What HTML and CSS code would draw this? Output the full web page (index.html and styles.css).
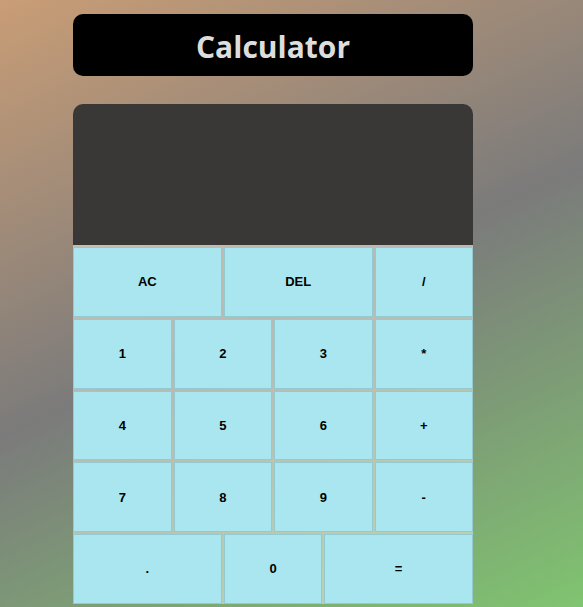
FILE: index.html
```html
<!DOCTYPE html>
<html lang="en">
<head>
<meta charset="utf-8">
<title>Calculator</title>
<link rel="stylesheet" href="styles.css">
</head>
<body>
<div class="app">
  <h1 class="title">Calculator</h1>
  <div class="calc">
    <div class="display"></div>
    <div class="keys">
      <button class="key span3">AC</button>
      <button class="key span3">DEL</button>
      <button class="key">/</button>
      <button class="key">1</button>
      <button class="key">2</button>
      <button class="key">3</button>
      <button class="key">*</button>
      <button class="key">4</button>
      <button class="key">5</button>
      <button class="key">6</button>
      <button class="key">+</button>
      <button class="key">7</button>
      <button class="key">8</button>
      <button class="key">9</button>
      <button class="key">-</button>
      <button class="key span3">.</button>
      <button class="key">0</button>
      <button class="key span3">=</button>
    </div>
  </div>
</div>
</body>
</html>
```
FILE: styles.css
```css
html, body {
  margin: 0;
  height: 100%;
}
body {
  background: linear-gradient(155deg, #c99d76 0%, #7b7b7b 50%, #80c470 100%);
  font-family: "Liberation Sans", Arial, sans-serif;
  overflow: hidden;
}
.app {
  width: 400px;
  padding: 14px 0 0 73px;
}
.title {
  margin: 0;
  height: 58px;
  padding-top: 4px;
  background: #000;
  border-radius: 10px;
  color: #dddddd;
  font-family: "Open Sans", sans-serif;
  font-weight: 700;
  font-size: 30px;
  line-height: 58px;
  text-align: center;
}
.calc {
  margin-top: 28px;
}
.display {
  height: 141px;
  background: #3a3836;
  border-radius: 10px 10px 0 0;
}
.keys {
  display: grid;
  grid-template-columns: repeat(8, 1fr);
  grid-auto-rows: 69.75px;
  gap: 2px;
  padding-top: 2px;
  background: rgba(235, 235, 225, 0.55);
}
.key {
  grid-column: span 2;
  margin: 0;
  padding: 0;
  background: #a9e6ef;
  border: 1px solid #93c9cf;
  font-family: "Liberation Sans", Arial, sans-serif;
  font-size: 13px;
  font-weight: 700;
  color: #000;
}
.key.span3 {
  grid-column: span 3;
}
```
